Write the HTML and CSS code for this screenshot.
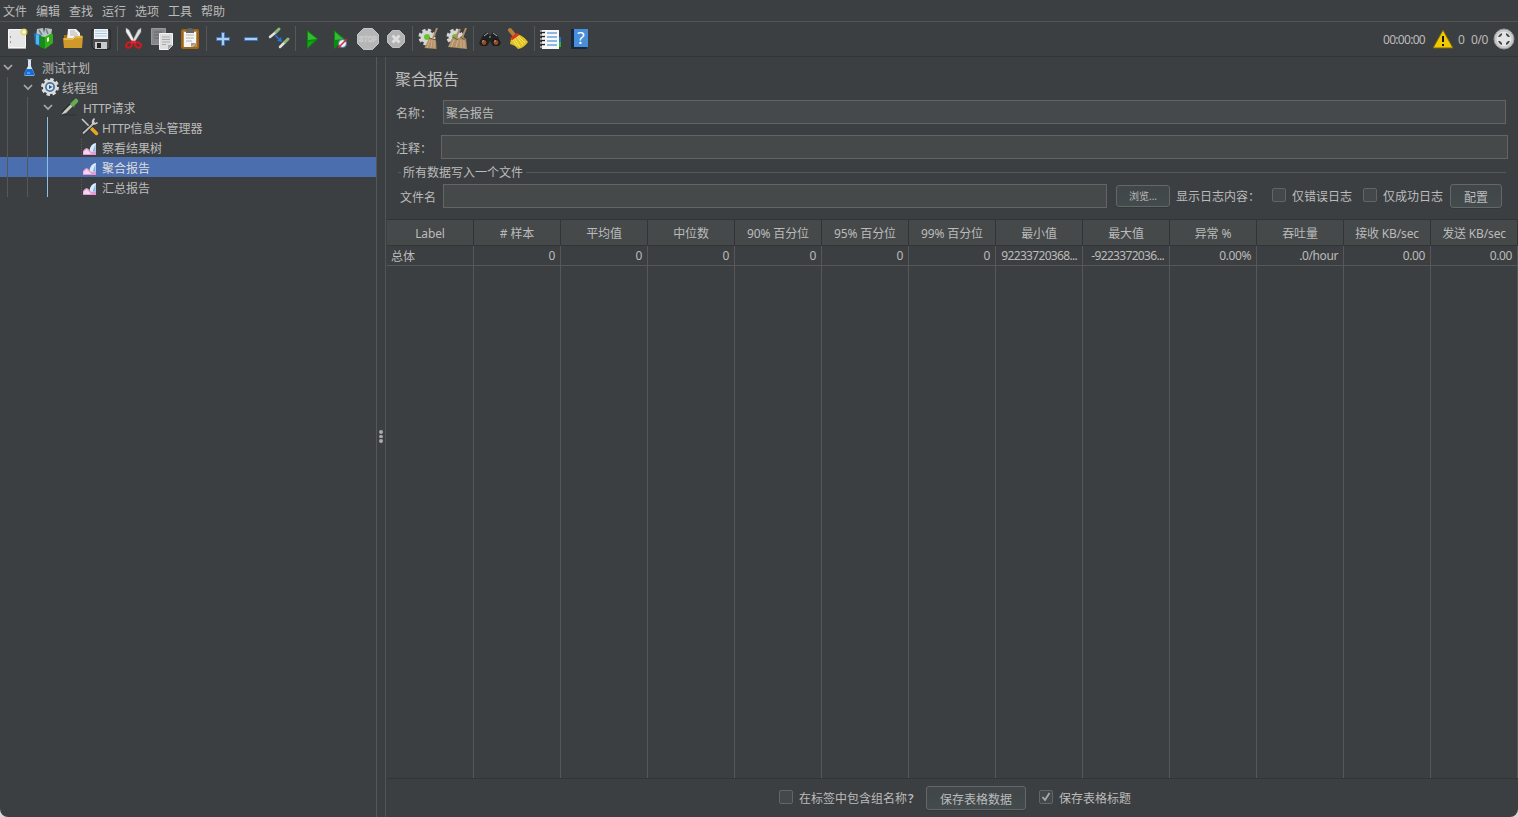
FILE: index.html
```html
<!DOCTYPE html>
<html lang="zh-CN">
<head>
<meta charset="utf-8">
<title>聚合报告</title>
<link rel="stylesheet" href="styles.css">
</head>
<body>
<svg class="symbols" width="0" height="0">
  <symbol id="chart" viewBox="0 0 20 20"><path d="M1.500 2v15.500h13" fill="none" stroke="#6b5f6c" stroke-dasharray="1 1.500" stroke-width=".8"/><path d="M3 18v-4q2-3 4-3 2 1 3 3l2-1 4-3v8z" fill="#e79ad2"/><path d="M3.500 17v-2l3-3 3 3 2 2z" fill="#f8d4ee"/><path d="M9.500 13q1-6 6.500-7v8q-3 1.500-4 1-2-.5-2.500-2z" fill="#dceaf8"/><path d="M15.500 7v7l-3 .7z" fill="#7fb4e2"/></symbol>
  <symbol id="chevron" viewBox="0 0 10 10"><path d="M1 3l4 4 4-4"/></symbol>
</svg>
<div class="window">
  <nav class="menubar"><span>文件</span><span>编辑</span><span>查找</span><span>运行</span><span>选项</span><span>工具</span><span>帮助</span></nav>

  <div class="toolbar">
    <svg class="tool" viewBox="3 25 28 28"><path d="M8.500 29.500h17v18h-17z" fill="#e6e6e6" stroke="#f8f8f8"/><path d="M8 48.500h18" stroke="#a8a8a8"/><path d="M10.500 36v2M10.500 41v2" stroke="#999"/><circle cx="24" cy="32" r="3.500" fill="#e3d650" fill-opacity=".8"/><circle cx="24" cy="32" r="1.800" fill="#fffde0"/></svg>
    <svg class="tool" viewBox="31 25 28 28"><path d="M37 29l6-1 1 5 1-5 7 1-1 8H36z" fill="#b9c4c8"/><path d="M39 30l3 5M46 29l2 5" stroke="#6d8188" stroke-width="1.500"/><path d="M34 33l7 2v12l-6-3z" fill="#1676b4"/><path d="M36 34l3 1v10l-3-1z" fill="#58b4e0"/><path d="M40 36l5 1v12l-5-2z" fill="#178d18"/><path d="M45 37l7-4 1 2v8l-8 6z" fill="#35ad1b"/><path d="M47 38l2-1v4l-2 1z" fill="#e5ffe0"/></svg>
    <svg class="tool" viewBox="59 25 28 28"><path d="M64 35h18v12H64z" fill="#a66f08"/><path d="M68 29h8l4 4v6H67z" fill="#f3f3f3"/><path d="M70 31h5M70 33h7M70 35h8" stroke="#999" stroke-width=".7"/><path d="M63 38h10l2-2h8l-1 12H64z" fill="#d09a2b"/><path d="M64 39h9l2-2h7" fill="none" stroke="#f3d27b"/></svg>
    <svg class="tool" viewBox="87 25 28 28"><path d="M92 30h18v19H94l-2-2z" fill="#4a4c4f" stroke="#1f2122"/><path d="M94 29h14v10H94z" fill="#eff4f8"/><path d="M95 31h12M95 33.500h12M95 36h12" stroke="#a9c6df"/><path d="M95 42h12v7H95z" fill="#c8cbcd"/><path d="M97 43h4v5h-4z" fill="#242628"/></svg>
    <i class="tool-sep"></i>
    <svg class="tool" viewBox="119 25 28 28"><path d="M126 28l3 2 6 12-2 1-7-11z" fill="#f1f1f1" stroke="#999" stroke-width=".5"/><path d="M141 28l-3 2-6 12 2 1 7-11z" fill="#dedede" stroke="#888" stroke-width=".5"/><ellipse cx="129" cy="45" rx="3" ry="2.400" transform="rotate(-35 129 45)" stroke="#d9161c" stroke-width="2"/><ellipse cx="138" cy="45" rx="3" ry="2.400" transform="rotate(35 138 45)" stroke="#d9161c" stroke-width="2"/><path d="M131 42h5" stroke="#e0282d" stroke-width="2.500"/></svg>
    <svg class="tool" viewBox="147 25 28 28"><path d="M151.500 28.500h14v16h-14z" fill="#85878a" stroke="#999"/><path d="M154 32h8M154 35h5M154 38h5" stroke="#666"/><path d="M159.500 33.500h13v12l-4 4h-9z" fill="#dedede" stroke="#f4f4f4"/><path d="M162 37h8M162 39.500h8M162 42h8M162 44.500h4" stroke="#aaa"/><path d="M168 50v-5h5z" fill="#aaa"/></svg>
    <svg class="tool" viewBox="175 25 28 28"><rect x="182" y="30" width="16" height="18" rx="1" fill="#b78b55" stroke="#a16410" stroke-width="2"/><path d="M184 32h12v11l-4 4h-8z" fill="#f5f5f5"/><path d="M186 35h8M186 38h8M186 41h6" stroke="#b2b2b2"/><path d="M191 47v-4h5z" fill="#999"/><path d="M186 30q4-4 8 0v3h-8z" fill="#63675f"/></svg>
    <i class="tool-sep wide"></i>
    <svg class="tool" viewBox="209 25 28 28"><path d="M221.500 32.500h3v5h5v3h-5v5h-3v-5h-5v-3h5z" fill="#a9cdf3" stroke="#3e74b8"/></svg>
    <svg class="tool" viewBox="237 25 28 28"><path d="M244.500 37.500h13v3h-13z" fill="#a9cdf3" stroke="#3e74b8"/></svg>
    <svg class="tool" viewBox="265 25 28 28"><path d="M270 37l6-5M280 47l5-5" stroke="#e2e2dd" stroke-width="2.500" stroke-linecap="round"/><path d="M276 32l3-3M285 42l3-3" stroke="#8eb878" stroke-width="3" stroke-linecap="round"/><path d="M275 35l5 5" stroke="#2777d7" stroke-width="1.500"/><path d="M282 42l-5-1 4-4z" fill="#2777d7"/></svg>
    <i class="tool-sep mid"></i>
    <svg class="tool" viewBox="298 25 28 28"><path d="M307 30l11 9-11 10z" fill="#078d0a"/><path d="M308 32l9 7-9 1z" fill="#36b936"/><path d="M308 47v-5l6-1z" fill="#14a814"/></svg>
    <svg class="tool" viewBox="326 25 28 28"><path d="M334 30l11 9-11 10z" fill="#078d0a"/><path d="M335 32l8 7-8 1z" fill="#36b936"/><circle cx="342.500" cy="43.500" r="4" fill="#eee" stroke="#4678ae"/><path d="M338 48l9-9" stroke="#d32632" stroke-width="1.500"/></svg>
    <svg class="tool" viewBox="354 25 28 28"><path d="M363.500 28.500h9l6 6v9l-6 6h-9l-6-6v-9z" fill="#b5b6b6" stroke="#c4c4c4"/><text class="stop-text" x="368" y="42" text-anchor="middle" textLength="18" lengthAdjust="spacingAndGlyphs">STOP</text></svg>
    <svg class="tool" viewBox="382 25 28 28"><path d="M392.500 30.500h7l5 5v7l-5 5h-7l-5-5v-7z" fill="#b1b2b2" stroke="#c0c0c0"/><path d="M392.500 35.500l7 7M399.500 35.500l-7 7" stroke="#dedede" stroke-width="3"/></svg>
    <i class="tool-sep thin"></i>
    <svg class="tool" viewBox="414 25 28 28"><circle cx="427" cy="37" r="6.500" fill="#d6d6d6" stroke="#d6d6d6" stroke-width="4" stroke-dasharray="3 2.100"/><circle cx="427" cy="37" r="3" fill="#68c32d"/><path d="M437 28l-4 10" stroke="#b18b66" stroke-width="2"/><path d="M429 38l7 2 .5 9-12-1z" fill="#b39168"/><path d="M430 40l-3 8M432 40l-1 8M434 40v8" stroke="#e0c29e" stroke-width=".6"/><path d="M429 38l7 2" stroke="#73543d"/></svg>
    <svg class="tool" viewBox="442 25 28 28"><circle cx="455" cy="37" r="6.500" fill="#d6d6d6" stroke="#d6d6d6" stroke-width="4" stroke-dasharray="3 2.100"/><circle cx="455" cy="37" r="3" fill="#68c32d"/><path d="M466 28l-4 10M460 29l-4 8" stroke="#b18b66" stroke-width="2"/><path d="M453 36l5 2 5-1 3 2 1 10-19-2z" fill="#b39168"/><path d="M454 40l-3 7M458 40l-2 7M461 40v8M464 40v8" stroke="#e0c29e" stroke-width=".7"/><path d="M453 37l5 3M460 37l5 3" stroke="#73543d"/></svg>
    <i class="tool-sep wide"></i>
    <svg class="tool" viewBox="476 25 28 28"><path d="M483 35l4-3 3 4 3-4 4 3 4 8-2 3h-6l-3-5-3 5h-6l-2-3z" fill="#202122"/><path d="M484 36l4-3M493 33l4 3M489 37h2" stroke="#aaa"/><circle cx="484" cy="42.500" r="3" fill="#8e4e2e" stroke="#111"/><circle cx="496" cy="42.500" r="3" fill="#8e4e2e" stroke="#111"/><path d="M482 41.500l2-1M494 41.500l2-1" stroke="#e6a27c"/></svg>
    <svg class="tool" viewBox="504 25 28 28"><path d="M510 30l4 5" stroke="#ba7d37" stroke-width="4" stroke-linecap="round"/><path d="M511 39l6-5q7 2 11 8-4 6-10 7-3-4-8-5z" fill="#e0c124"/><path d="M513 40l4 6M515 39l5 8M517 37l6 8M518 36l7 7" stroke="#fff17a" stroke-width=".8"/><path d="M511 39l7-5" stroke="#d73422" stroke-width="3"/></svg>
    <i class="tool-sep end"></i>
    <svg class="tool" viewBox="537 25 28 28"><path d="M557 37h4v5h-4z" fill="#1674dc"/><path d="M557 42h4v5h-4z" fill="#27b52b"/><path d="M542 30h17v19h-17z" fill="#f7f7f7"/><path d="M547 33h10M547 37h10M547 41h10M547 45h10" stroke="#2879c9" stroke-width="1.200"/><path d="M541 32.500h4M541 36.500h4M541 40.500h4M541 44.500h4" stroke="#202020" stroke-width="1.500"/><path d="M540 31h4M540 35h4M540 39h4M540 43h4M540 47h4" stroke="#eee"/></svg>
    <svg class="tool" viewBox="565 25 28 28"><path d="M571 29h16v20h-16z" fill="#17283e"/><path d="M574 29h14v18h-14z" fill="#478fdb"/><text class="help-text" x="581" y="44" text-anchor="middle">?</text></svg>
    <div class="status"><span class="time">00:00:00</span>
      <svg class="warn" viewBox="0 0 22 22"><path d="M11 2L21 20H1z" fill="#f2c900" stroke="#756315"/><path d="M11 8v6M11 16v2" stroke="#171717" stroke-width="2"/></svg>
      <span class="errors">0</span><span class="threads">0/0</span>
      <svg class="remote" viewBox="0 0 22 22"><circle cx="11" cy="11" r="10" fill="#c8c8c8" stroke="#999"/><circle cx="11" cy="11" r="7.500" fill="#e4e4e4"/><path d="M5 9q1-3 4-4v2L7 9zM13 5q3 1 4 4h-2l-2-2zM5 13h2l2 2v2q-3-1-4-4M15 13h2q-1 3-4 4v-2z" fill="#48494a"/></svg>
    </div>
  </div>

  <main class="workspace">
    <aside class="tree">
      <svg class="tree-guides" viewBox="0 0 60 140"><path d="M7.500 20v120M27.500 40v120" stroke="#555759"/><path d="M47.500 60v80" stroke="#8ac1e5"/></svg>
      <div class="node level-0"><svg class="chevron"><use href="#chevron"/></svg><svg class="node-icon" viewBox="0 0 20 20"><path d="M8 3v6l-4 8q0 2 2 2h7q2 0 1.500-2L11 9V3z" fill="#d8e4ed"/><path d="M7.500 2.500h4" stroke="#a2b3bf"/><path d="M6.500 12h5.500l2.500 5q0 1.500-2 1.500H6q-2 0-2-1.500z" fill="#136ddd"/><path d="M7 16h3" stroke="#8ec9ff"/></svg><span>测试计划</span></div>
      <div class="node level-1"><svg class="chevron"><use href="#chevron"/></svg><svg class="node-icon" viewBox="0 0 20 20"><circle cx="10" cy="10" r="7.200" fill="#ddd" stroke="#ddd" stroke-width="3.500" stroke-dasharray="3.200 2.450"/><circle cx="10" cy="10" r="5" fill="#4c759b"/><circle cx="10" cy="10" r="3.200" fill="#dce6ef"/><path d="M9 8l3.500 2L9 12z" fill="#315a87"/></svg><span>线程组</span></div>
      <div class="node level-2"><svg class="chevron"><use href="#chevron"/></svg><svg class="node-icon" viewBox="0 0 20 20"><path d="M2 18h14" stroke="#2e3031"/><path d="M3 16l8-8" stroke="#252525" stroke-width="3.500"/><path d="M1.500 17.500L4 14l7-7 2 2-7 7z" fill="#c6cfc2"/><path d="M10.500 6l4 4" stroke="#467939" stroke-width="2"/><path d="M13 7l3-3" stroke="#65ad50" stroke-width="4.500" stroke-linecap="round"/></svg><span><b>HTTP</b>请求</span></div>
      <div class="node level-3"><svg class="node-icon" viewBox="0 0 20 20"><path d="M2 2l9 9" stroke="#ccc" stroke-width="1.500"/><path d="M11.500 11.500l5 5" stroke="#e5a824" stroke-width="3.500" stroke-linecap="round"/><path d="M3 16.500L14 6" stroke="#171819" stroke-width="3.500"/><path d="M3 16.500L14 6" stroke="#bbb" stroke-width="2.200"/><path d="M14 1q-3 2-2 6 3 2 6-1l-1-1-2 1-1-2 1-2z" fill="#ccc"/></svg><span><b>HTTP</b>信息头管理器</span></div>
      <div class="node level-3"><svg class="node-icon"><use href="#chart"/></svg><span>察看结果树</span></div>
      <div class="node level-3 selected"><svg class="node-icon"><use href="#chart"/></svg><span>聚合报告</span></div>
      <div class="node level-3"><svg class="node-icon"><use href="#chart"/></svg><span>汇总报告</span></div>
    </aside>
    <div class="divider"><i></i><i></i><i></i></div>
    <section class="panel">
      <h1>聚合报告</h1>
      <div class="form-row name-row"><label>名称<em>：</em></label><div class="field">聚合报告</div></div>
      <div class="form-row comment-row"><label>注释<em>：</em></label><div class="field"></div></div>
      <div class="group-title"><span>所有数据写入一个文件</span></div>
      <div class="file-row">
        <label>文件名</label><div class="field"></div><button class="browse">浏览...</button><span class="log-label">显示日志内容<em>：</em></span>
        <i class="check"></i><span class="only-error">仅错误日志</span><i class="check"></i><span class="only-success">仅成功日志</span><button class="config">配置</button>
      </div>
      <div class="table">
        <div class="row head"><span>Label</span><span># 样本</span><span>平均值</span><span>中位数</span><span>90% 百分位</span><span>95% 百分位</span><span>99% 百分位</span><span>最小值</span><span>最大值</span><span>异常 %</span><span>吞吐量</span><span>接收 KB/sec</span><span>发送 KB/sec</span></div>
        <div class="row data"><span class="first">总体</span><span>0</span><span>0</span><span>0</span><span>0</span><span>0</span><span>0</span><span class="tight">92233720368...</span><span class="tight">-9223372036...</span><span>0.00%</span><span>.0/hour</span><span>0.00</span><span>0.00</span></div>
        <div class="row blank"><span></span><span></span><span></span><span></span><span></span><span></span><span></span><span></span><span></span><span></span><span></span><span></span><span></span></div>
      </div>
      <footer><i class="check"></i><span class="include">在标签中包含组名称<b>?</b></span><button class="save">保存表格数据</button><i class="check"><svg viewBox="0 0 12 12"><path d="M2.500 6l2.500 3 4.500-7"/></svg></i><span>保存表格标题</span></footer>
    </section>
  </main>
</div>
</body>
</html>
```
FILE: styles.css
```css
* { box-sizing: border-box; }
html { background: #d8d8d8; }
body { margin: 0; font: 12px/20px "Noto Sans", "Noto Sans CJK SC", sans-serif; color: #bbb; }
button { font: inherit; color: inherit; padding: 0; }
svg { flex: none; fill: none; }
em { font-style: normal; }
.symbols { position: absolute; }
.window { display: flex; flex-direction: column; width: 1518px; height: 817px; overflow: hidden; background: #3c3f41; border-radius: 0 0 8px 8px; white-space: nowrap; }

.menubar { display: flex; gap: 9px; height: 22px; padding: 2px 0 0 3px; border-bottom: 1px solid #515355; line-height: 19px; }
.menubar span { width: 24px; }

.toolbar { display: flex; align-items: center; height: 35px; padding: 3px 3px 4px; border-bottom: 1px solid #323537; }
.tool { width: 28px; height: 28px; }
.tool-sep { flex: none; width: 4px; height: 25px; background: linear-gradient(#555759, #555759) 2px 0 / 1px 100% no-repeat; }
.tool-sep.wide { width: 6px; background-position-x: 3px; }
.tool-sep.mid { width: 5px; }
.tool-sep.end { width: 5px; }
.stop-text { font: bold 9px "Liberation Sans", sans-serif; fill: #b5b6b6; stroke: #d2d2d2; stroke-width: .6px; }
.help-text { font: 17px "Noto Sans", sans-serif; fill: #fff; }
.status { display: flex; align-items: center; margin-left: auto; }
.status span { padding-top: 2px; }
.time { width: 49px; letter-spacing: -.7px; }
.warn, .remote { width: 22px; height: 22px; }
.status .errors { width: 17px; padding-left: 4px; }
.threads { width: 22px; letter-spacing: -.4px; }

.workspace { display: flex; height: 760px; }
.tree { position: relative; width: 377px; border-right: 1px solid #555759; }
.tree-guides { position: absolute; left: 0; top: 0; width: 60px; height: 140px; }
.node { display: flex; align-items: center; height: 20px; }
.node span { line-height: 19px; padding-top: 3px; margin-left: 2px; }
.node b { font-weight: normal; letter-spacing: -.3px; }
.level-0 { padding-left: 3px; }
.level-1 { padding-left: 23px; }
.level-2 { padding-left: 43px; }
.level-3 { padding-left: 80px; }
.level-2 span { margin-left: 3px; }
.chevron { width: 10px; height: 10px; margin-right: 7px; stroke: #aaa; stroke-width: 1.7; }
.node-icon { width: 20px; height: 20px; }
.selected { background: #4b6eaf; color: #ddd; }
.divider { width: 9px; padding-top: 373px; border-right: 1px solid #515355; }
.divider i { display: block; width: 4px; height: 3.5px; margin: 0 0 1px 2px; background: #aaa; border-radius: 2px; }

.panel { display: flex; flex-direction: column; width: 1132px; height: 760px; padding-left: 1px; }
h1 { margin: 0; padding: 10px 0 0 8px; height: 43px; font-size: 16px; font-weight: normal; line-height: 24px; }
.field { height: 24px; background: #45494a; border: 1px solid #646464; line-height: 25px; padding-left: 2px; }
.form-row { display: flex; height: 24px; padding-left: 9px; line-height: 27px; }
.name-row label { width: 47px; }
.name-row .field { width: 1063px; }
.comment-row { margin-top: 11px; }
.comment-row label { width: 45px; }
.comment-row .field { width: 1067px; }
.group-title { display: flex; align-items: center; height: 20px; margin: 3px 12px 0 11px; }
.group-title span { padding-top: 2px; }
.group-title::before { content: ""; width: 3px; height: 1px; margin-right: 2px; background: #555759; }
.group-title::after { content: ""; flex: 1; height: 1px; margin-left: 3px; background: #555759; }
.file-row { display: flex; align-items: center; height: 24px; margin-top: 2px; padding-left: 13px; }
.file-row label { width: 43px; padding-top: 3px; }
.file-row .field { width: 664px; }
.file-row span { padding-top: 2px; }
button { flex: none; background: linear-gradient(#414648, #434b4d); border: 1px solid #646767; border-radius: 3px; box-shadow: 0 1px #353839; }
.browse { width: 54px; height: 22px; margin-left: 9px; font-size: 10px; line-height: 20px; }
.log-label { width: 96px; margin-left: 6px; }
.check { flex: none; width: 14px; height: 14px; background: #43494a; border: 1px solid #646464; border-radius: 2px; }
.file-row .check { margin-bottom: 2px; }
.check svg { display: block; width: 12px; height: 12px; stroke: #aaa; stroke-width: 1.8; }
.file-row .only-error { width: 77px; padding-left: 6px; }
.file-row .only-success { width: 73px; padding-left: 6px; }
.config { width: 52px; height: 24px; line-height: 25px; }

.table { display: flex; flex-direction: column; height: 560px; margin-top: 11px; border-top: 1px solid #323537; border-bottom: 1px solid #323537; }
.row { display: grid; grid-template-columns: repeat(13, 87px); }
.row span { border-right: 1px solid #555759; overflow: hidden; letter-spacing: -.15px; }
.head { height: 26px; background: #45494a; border-bottom: 1px solid #323537; }
.head span { text-align: center; line-height: 28px; border-right-color: #323537; }
.data { height: 20px; border-bottom: 1px solid #555759; }
.data span { text-align: right; padding-right: 5px; line-height: 20px; letter-spacing: -.4px; }
.data .first { text-align: left; padding-left: 4px; line-height: 21px; letter-spacing: 0; }
.data .tight { letter-spacing: -.68px; }
.blank { flex: 1; }
footer { display: flex; align-items: center; height: 38px; padding-left: 392px; }
footer span { margin-left: 6px; padding-top: 2px; }
footer .include { width: 121px; }
footer b { margin-left: 1px; font-weight: 600; }
.save { width: 100px; height: 24px; margin: 0 13px 0 6px; line-height: 25px; }
footer .check { margin-bottom: 2px; }
```
